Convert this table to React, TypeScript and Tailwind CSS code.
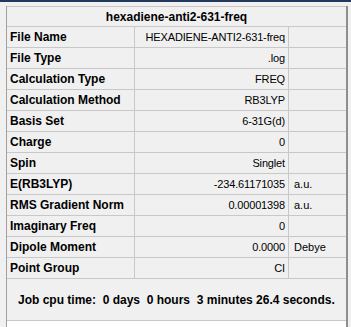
type Row = { label: string; value: string; unit?: string };

const rows: Row[] = [
  { label: "File Name", value: "HEXADIENE-ANTI2-631-freq" },
  { label: "File Type", value: ".log" },
  { label: "Calculation Type", value: "FREQ" },
  { label: "Calculation Method", value: "RB3LYP" },
  { label: "Basis Set", value: "6-31G(d)" },
  { label: "Charge", value: "0" },
  { label: "Spin", value: "Singlet" },
  { label: "E(RB3LYP)", value: "-234.61171035", unit: "a.u." },
  { label: "RMS Gradient Norm", value: "0.00001398", unit: "a.u." },
  { label: "Imaginary Freq", value: "0" },
  { label: "Dipole Moment", value: "0.0000", unit: "Debye" },
  { label: "Point Group", value: "CI" },
];

const SummaryRow = ({ label, value, unit }: Row) => (
  <div className="flex h-[21px] border-b border-[#c8c8c8]">
    <div className="w-[128px] border-r border-[#c8c8c8] pl-[3px] flex items-center font-bold text-[12px]">
      {label}
    </div>
    <div className="w-[154px] border-r border-[#c8c8c8] pr-[3px] flex items-center justify-end text-[11px] tracking-[-0.15px]">
      {value}
    </div>
    <div className="flex-1 pl-[5px] flex items-center text-[11px]">{unit}</div>
  </div>
);

export default function App() {
  return (
    <div className="w-[351px] h-[327px] bg-[#f0f0f0] text-black overflow-hidden flex flex-col font-['Liberation_Sans',Arial,sans-serif]">
      <div className="h-[2px] bg-[#22385c]" />
      <div className="mt-[4px] ml-[6px] w-[342px] flex-1 flex flex-col border-l border-l-[#a0a0a0] border-r-2 border-r-[#8e8e8e]">
        <div className="h-[21px] border-t border-b border-[#c8c8c8] flex items-center justify-center font-bold text-[12px]">
          hexadiene-anti2-631-freq
        </div>
        {rows.map((r) => (
          <SummaryRow key={r.label} {...r} />
        ))}
        <div className="h-[42px] border-b border-[#c8c8c8] flex items-center pl-[11px] font-bold text-[12px] whitespace-pre">
          Job cpu time:  0 days  0 hours  3 minutes 26.4 seconds.
        </div>
        <div className="flex-1 bg-white" />
      </div>
    </div>
  );
}
